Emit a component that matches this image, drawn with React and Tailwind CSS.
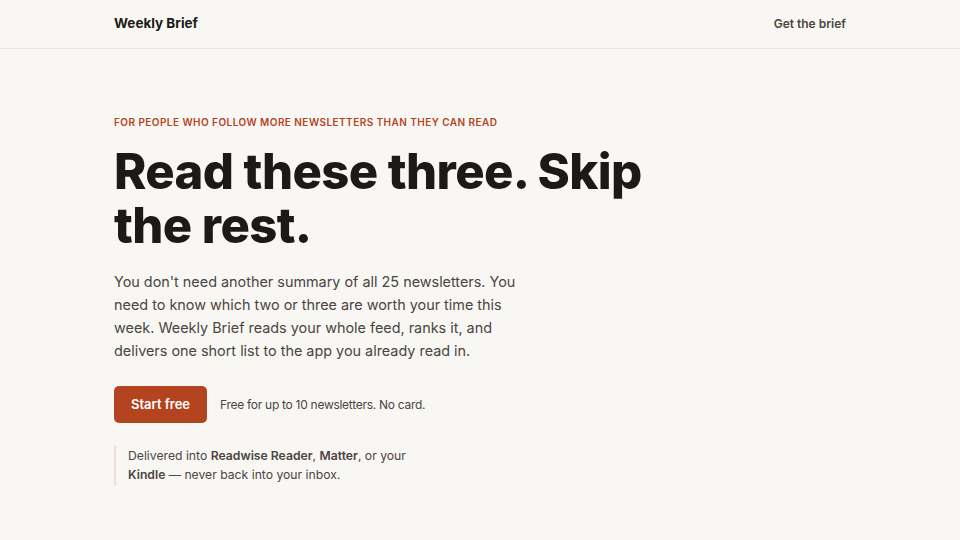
import React from "react";

const App = () => {
    return (
        <div className="min-h-screen bg-[#f9f7f3] text-[#1c1a18] font-['Inter',sans-serif]">
            {/* Header */}
            <header className="border-b border-[#e8e3dc]">
                <div className="max-w-[732px] mx-auto h-12 flex items-center justify-between">
                    <span className="text-[13.5px] font-bold -mt-[2px]">Weekly Brief</span>
                    <a href="#" className="text-[12px] font-semibold text-[#4a4541]">
                        Get the brief
                    </a>
                </div>
            </header>

            {/* Hero */}
            <main className="max-w-[732px] mx-auto pt-[67px]">
                <p className="text-[10px] font-semibold tracking-[0.45px] text-[#b4441f] leading-[12px]">
                    FOR PEOPLE WHO FOLLOW MORE NEWSLETTERS THAN THEY CAN READ
                </p>
                <h1 className="mt-[17px] max-w-[560px] text-[49px] leading-[54px] font-extrabold tracking-[-0.6px]">
                    Read these three. Skip the rest.
                </h1>
                <p className="mt-[17px] max-w-[404px] text-[14.4px] leading-[23px] text-[#4a4541]">
                    You don't need another summary of all 25 newsletters. You need to know which
                    two or three are worth your time this week. Weekly Brief reads your whole feed,
                    ranks it, and delivers one short list to the app you already read in.
                </p>
                <div className="mt-[24px] flex items-center gap-[13px]">
                    <button className="h-[37px] w-[93px] rounded-[5px] bg-[#b4441f] text-white text-[13px] font-semibold">
                        Start free
                    </button>
                    <span className="text-[12px] tracking-[-0.28px] text-[#4a4541]">
                        Free for up to 10 newsletters. No card.
                    </span>
                </div>
                <div className="mt-[22px] border-l-2 border-[#f0ddd5] pl-3 py-[1px] max-w-[300px] text-[12.2px] leading-[19px] text-[#4a4541]">
                    Delivered into <b className="font-semibold">Readwise Reader</b>,{" "}
                    <b className="font-semibold">Matter</b>, or your{" "}
                    <b className="font-semibold">Kindle</b> — never back into your inbox.
                </div>
            </main>
        </div>
    );
};

export default App;
